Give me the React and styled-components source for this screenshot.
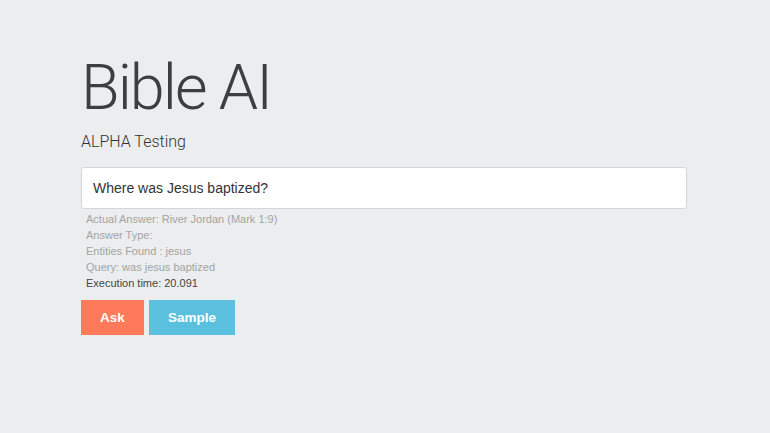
import React from "react";
import styled, { createGlobalStyle } from "styled-components";

const Global = createGlobalStyle`
  html, body { margin: 0; padding: 0; background: #ecedef; }
  body { font-family: "Liberation Sans", Arial, sans-serif; color: #333; }
`;

const Page = styled.div`
  width: 770px;
  height: 433px;
  box-sizing: border-box;
  padding: 52px 83px 0 81px;
  background: #ecedef;
`;

const Title = styled.h1`
  margin: 0;
  font-family: "Roboto", sans-serif;
  font-weight: 300;
  font-size: 63px;
  line-height: 72px;
  color: #3a3f44;
  letter-spacing: -2px;
`;

const Subtitle = styled.h2`
  margin: 7px 0 0;
  font-family: "Roboto", sans-serif;
  font-weight: 300;
  font-size: 16px;
  line-height: 22px;
  color: #333;
`;

const Input = styled.input`
  display: block;
  box-sizing: border-box;
  width: 606px;
  height: 42px;
  margin-top: 14px;
  padding: 0 11px;
  border: 1px solid #d4d5d7;
  border-radius: 3px;
  background: #fff;
  font-family: "Liberation Sans", Arial, sans-serif;
  font-size: 14px;
  color: #333;
  outline: none;
`;

const Info = styled.div`
  margin-top: 2px;
  padding-left: 5px;
  font-size: 11px;
  line-height: 16px;
`;

const Line = styled.div`
  color: ${(p) => (p.$dark ? "#444" : "#a3a4a6")};
`;

const Buttons = styled.div`
  display: flex;
  gap: 5px;
  margin-top: 9px;
`;

const Button = styled.button`
  width: ${(p) => p.$w}px;
  height: 35px;
  padding: 0;
  border: none;
  border-radius: 0;
  background: ${(p) => p.$bg};
  color: #fff;
  font-family: "Liberation Sans", Arial, sans-serif;
  font-weight: bold;
  font-size: 13.5px;
  cursor: pointer;
`;

export default function App() {
  return (
    <>
      <Global />
      <Page>
        <Title>Bible AI</Title>
        <Subtitle>ALPHA Testing</Subtitle>
        <Input defaultValue="Where was Jesus baptized?" />
        <Info>
          <Line>Actual Answer: River Jordan (Mark 1:9)</Line>
          <Line>Answer Type:</Line>
          <Line>Entities Found : jesus</Line>
          <Line>Query: was jesus baptized</Line>
          <Line $dark>Execution time: 20.091</Line>
        </Info>
        <Buttons>
          <Button $bg="#ff7a5a" $w={63}>Ask</Button>
          <Button $bg="#5bc0de" $w={86}>Sample</Button>
        </Buttons>
      </Page>
    </>
  );
}
